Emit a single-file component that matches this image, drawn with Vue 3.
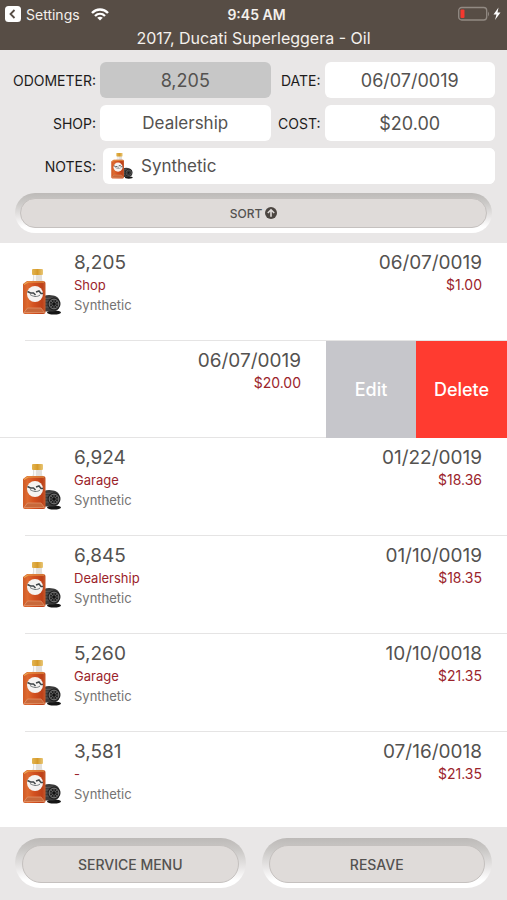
<template>
    <div class="oil-log">
        <svg class="symbols" aria-hidden="true">
            <defs>
                <linearGradient id="oil" x1="0" y1="0" x2="1" y2="0">
                    <stop offset="0" stop-color="#cf5a26" />
                    <stop offset="0.2" stop-color="#de6a30" />
                    <stop offset="0.5" stop-color="#d2501f" />
                    <stop offset="0.85" stop-color="#bd4119" />
                    <stop offset="1" stop-color="#c85a2c" />
                </linearGradient>
                <linearGradient id="cap" x1="0" y1="0" x2="1" y2="0">
                    <stop offset="0" stop-color="#e3b552" />
                    <stop offset="0.5" stop-color="#d69b2b" />
                    <stop offset="1" stop-color="#e8c777" />
                </linearGradient>
                <symbol id="bottle" viewBox="0 0 38 46">
                    <ellipse cx="31" cy="43.500" rx="7" ry="2" fill="#151515" />
                    <path d="M21 27q4-1.500 9-.5c4 .5 7 3 7 8s-3 8-7 8h-9z" fill="#3c3c3c" />
                    <path d="M22 29.500l8-.5M22 32h5M22 35h4M22 38h5" stroke="#656565" stroke-width="0.8" />
                    <circle cx="31" cy="35" r="6.500" fill="#222" />
                    <circle cx="31" cy="35" r="4.800" fill="none" stroke="#858585" stroke-width="0.9" />
                    <path d="M31 31v8M27 35h8M28 32l6 6M34 32l-6 6" stroke="#6a6a6a" stroke-width="0.8" />
                    <circle cx="31" cy="35" r="1.500" fill="#111" />
                    <path d="M10 5h9v5q0 2 2 3H8q2-1 2-3z" fill="#e2e0dc" />
                    <path d="M12 6v6" stroke="#fff" stroke-width="1.500" />
                    <rect x="9" y="0" width="11" height="6" rx="1" fill="url(#cap)" />
                    <path d="M4 12h16q2.500 0 2.500 2.500V43q0 2-2 2H2q-2 0-2-2V15z" fill="url(#oil)" />
                    <path d="M1 15.500l4-2.500h16" fill="none" stroke="#eaa64e" stroke-width="1.200" />
                    <path d="M1 43.500L4.500 39h13.500l3.500 4.500z" fill="#c8683a" stroke="#e29a70" stroke-width="0.700" />
                    <circle cx="12" cy="25" r="8" fill="#f5f3f1" />
                    <path d="M4.500 22.500l3 1.500h3l2 2M13 23l3-1 2 2.500h2" fill="none" stroke="#3f4648" stroke-width="1.500" />
                    <path d="M7 25.500c3 2 7 3 10 .5" fill="none" stroke="#6d7476" stroke-width="1" />
                </symbol>
            </defs>
        </svg>

        <header class="top-bar">
            <div class="status">
                <a class="back" href="#">
                    <svg width="16" height="16" viewBox="0 0 16 16">
                        <rect width="16" height="16" rx="3.500" fill="#fff" />
                        <path d="M9.500 4L5.500 8l4 4" fill="none" stroke="#574d45" stroke-width="1.800" />
                    </svg>
                    Settings
                    <svg class="wifi" width="18" height="13" viewBox="0 0 18 13">
                        <g fill="none" stroke="#fff" stroke-width="2.400">
                            <path d="M1 5C5.500 0.300 12.500 0.300 17 5" />
                            <path d="M4 8C6.900 5.200 11.100 5.200 14 8" />
                        </g>
                        <path d="M6.200 9.800Q9 7.600 11.800 9.800L9 12.600z" fill="#fff" />
                    </svg>
                </a>
                <span class="clock">9:45 AM</span>
                <span class="battery">
                    <svg width="44" height="16" viewBox="0 0 44 16">
                        <rect x="0.700" y="1.500" width="28" height="12.500" rx="3" fill="none" stroke="#928a83" stroke-width="1.300" />
                        <rect x="2.500" y="3.500" width="4" height="8.500" rx="1" fill="#f4382f" />
                        <path d="M30 5.500q2 2.500 0 5z" fill="#928a83" />
                        <path d="M40.500 1.500L35.500 8.600h3L37 14 42.500 6.600h-3z" fill="#fff" />
                    </svg>
                </span>
            </div>
            <h1>2017, Ducati Superleggera - Oil</h1>
        </header>

        <form class="entry" @submit.prevent>
            <div class="fields">
                <label for="odometer">ODOMETER:</label>
                <input id="odometer" v-model="entry.odometer" class="selected" />
                <label for="date">DATE:</label>
                <input id="date" v-model="entry.date" />
                <label for="shop">SHOP:</label>
                <input id="shop" v-model="entry.shop" />
                <label for="cost">COST:</label>
                <input id="cost" v-model="entry.cost" />
                <label for="notes">NOTES:</label>
                <div class="notes">
                    <svg class="notes-icon"><use href="#bottle" /></svg>
                    <input id="notes" v-model="entry.notes" />
                </div>
            </div>
            <button type="button" class="pill sort" @click="ascending = !ascending">
                <span>
                    SORT
                    <svg width="12" height="12" viewBox="0 0 12 12">
                        <circle cx="6" cy="6" r="6" fill="#4c4641" />
                        <path d="M6 9.800V3M2.800 6L6 2.800 9.200 6" fill="none" stroke="#dfdbd9" stroke-width="1.600" />
                    </svg>
                </span>
            </button>
        </form>

        <ul class="records">
            <li v-for="(record, index) in sorted" :key="index" :class="{ swiped: record.swiped }">
                <svg v-if="!record.swiped" class="record-icon"><use href="#bottle" /></svg>
                <div v-if="!record.swiped" class="info">
                    <div class="main">{{ record.odometer }}</div>
                    <div class="sub">{{ record.shop }}</div>
                    <div class="note">{{ record.notes }}</div>
                </div>
                <div class="amount">
                    <div class="main">{{ record.date }}</div>
                    <div class="sub">{{ record.cost }}</div>
                </div>
                <div v-if="record.swiped" class="actions">
                    <button type="button" class="edit">Edit</button>
                    <button type="button" class="delete">Delete</button>
                </div>
            </li>
        </ul>

        <footer class="bottom-bar">
            <button type="button" class="pill"><span>SERVICE MENU</span></button>
            <button type="button" class="pill"><span>RESAVE</span></button>
        </footer>
    </div>
</template>

<script setup>
import { ref, reactive, computed } from 'vue';

const entry = reactive({
    odometer: '8,205',
    date: '06/07/0019',
    shop: 'Dealership',
    cost: '$20.00',
    notes: 'Synthetic'
});

const ascending = ref(false);

const records = ref([
    { odometer: '8,205', shop: 'Shop', notes: 'Synthetic', date: '06/07/0019', cost: '$1.00' },
    { date: '06/07/0019', cost: '$20.00', swiped: true },
    { odometer: '6,924', shop: 'Garage', notes: 'Synthetic', date: '01/22/0019', cost: '$18.36' },
    { odometer: '6,845', shop: 'Dealership', notes: 'Synthetic', date: '01/10/0019', cost: '$18.35' },
    { odometer: '5,260', shop: 'Garage', notes: 'Synthetic', date: '10/10/0018', cost: '$21.35' },
    { odometer: '3,581', shop: '-', notes: 'Synthetic', date: '07/16/0018', cost: '$21.35' }
]);

const sorted = computed(() => (ascending.value ? [...records.value].reverse() : records.value));
</script>

<style>
body {
    margin: 0;
    background-color: #e9e7e7;
}
</style>

<style scoped>
.oil-log {
    display: flex;
    flex-direction: column;
    min-height: 100vh;
    font-family: Inter, "Liberation Sans", sans-serif;
    color: #545250;
    background-color: #e9e7e7;
}

.oil-log * {
    box-sizing: border-box;
}

button,
input {
    font-family: inherit;
    color: inherit;
    border: none;
    margin: 0;
    padding: 0;
}

button {
    cursor: pointer;
}

.symbols {
    position: absolute;
    width: 0;
    height: 0;
}

.top-bar {
    background-color: #574d45;
    color: #f4f0ec;
    height: 50px;
}

.status {
    display: grid;
    grid-template-columns: 1fr auto 1fr;
    align-items: center;
    height: 28px;
    padding: 0 5px;
    font-size: 14px;
}

.back {
    display: flex;
    align-items: center;
    gap: 5px;
    color: inherit;
    text-decoration: none;
}

.wifi {
    margin-left: 6px;
}

.clock {
    padding-left: 6px;
    font-weight: 600;
}

.battery {
    display: flex;
    justify-content: flex-end;
}

h1 {
    margin: 0;
    font-size: 16px;
    font-weight: 400;
    line-height: 20px;
    text-align: center;
}

.entry {
    padding: 12px 12px 10px;
}

.fields {
    display: grid;
    grid-template-columns: 84px 1fr 46px 1fr;
    column-gap: 4px;
    row-gap: 7px;
    align-items: center;
}

label {
    font-size: 14px;
    color: #1d1c1c;
    text-align: right;
}

.fields input {
    width: 100%;
    min-width: 0;
    height: 36px;
    border-radius: 6px;
    background-color: #fff;
    font-size: 18px;
    text-align: center;
}

.fields input.selected {
    background-color: #c7c7c7;
}

.fields #shop,
.fields #notes {
    font-size: 17px;
}

.notes {
    grid-column: 2 / 5;
    display: flex;
    align-items: center;
    gap: 8px;
    margin-left: 3px;
    padding-left: 8px;
    border-radius: 6px;
    background-color: #fff;
}

.notes input {
    flex: 1;
    text-align: left;
}

.notes-icon {
    width: 22px;
    height: 26px;
}

.pill {
    flex: 1;
    padding: 7px 7px 5px;
    border-radius: 25px;
    background: linear-gradient(#bdbab8, #cbc9c7 25%, #e9e7e7 60%, #fff 85%);
    font-size: 14px;
    font-weight: 500;
}

.pill span {
    display: flex;
    align-items: center;
    justify-content: center;
    gap: 3px;
    height: 38px;
    border: 1px solid #c5c1bf;
    border-radius: 19px;
    background-color: #dfdbd9;
}

.sort {
    display: block;
    width: calc(100% - 6px);
    margin: 9px 3px 0;
    padding: 5px;
    font-size: 12px;
}

.sort span {
    height: 30px;
}

.records {
    flex: 1;
    display: flex;
    flex-direction: column;
    margin: 0;
    padding: 0;
    list-style: none;
    background-color: #fff;
}

.records li {
    flex: 1;
    display: flex;
    min-height: 97px;
    padding: 8px 25px 0 23px;
    background: linear-gradient(#e5e4e4, #e5e4e4) 25px 100% / 100% 1px no-repeat;
}

.records li:last-child {
    flex: none;
    min-height: 95px;
    background: none;
}

.records li.swiped {
    justify-content: flex-end;
    padding-right: 0;
    background-position: 0 100%;
}

.record-icon {
    width: 38px;
    height: 46px;
    margin: 18px 13px 0 0;
}

.info {
    flex: 1;
}

.amount {
    text-align: right;
}

.main {
    font-size: 19px;
    line-height: 24px;
}

.sub {
    font-size: 14px;
    line-height: 20px;
    color: #9b242b;
}

.note {
    font-size: 13px;
    line-height: 20px;
    color: #757372;
}

.info .sub {
    font-size: 13px;
}

.actions {
    display: flex;
    margin: -8px 0 0 25px;
}

.actions button {
    width: 91px;
    color: #fff;
    font-size: 18px;
    font-weight: 500;
}

.actions .edit {
    width: 90px;
    background-color: #c6c6cb;
}

.delete {
    background-color: #ff3b30;
}

.bottom-bar {
    display: flex;
    gap: 16px;
    padding: 11px 15px 12px;
}
</style>
